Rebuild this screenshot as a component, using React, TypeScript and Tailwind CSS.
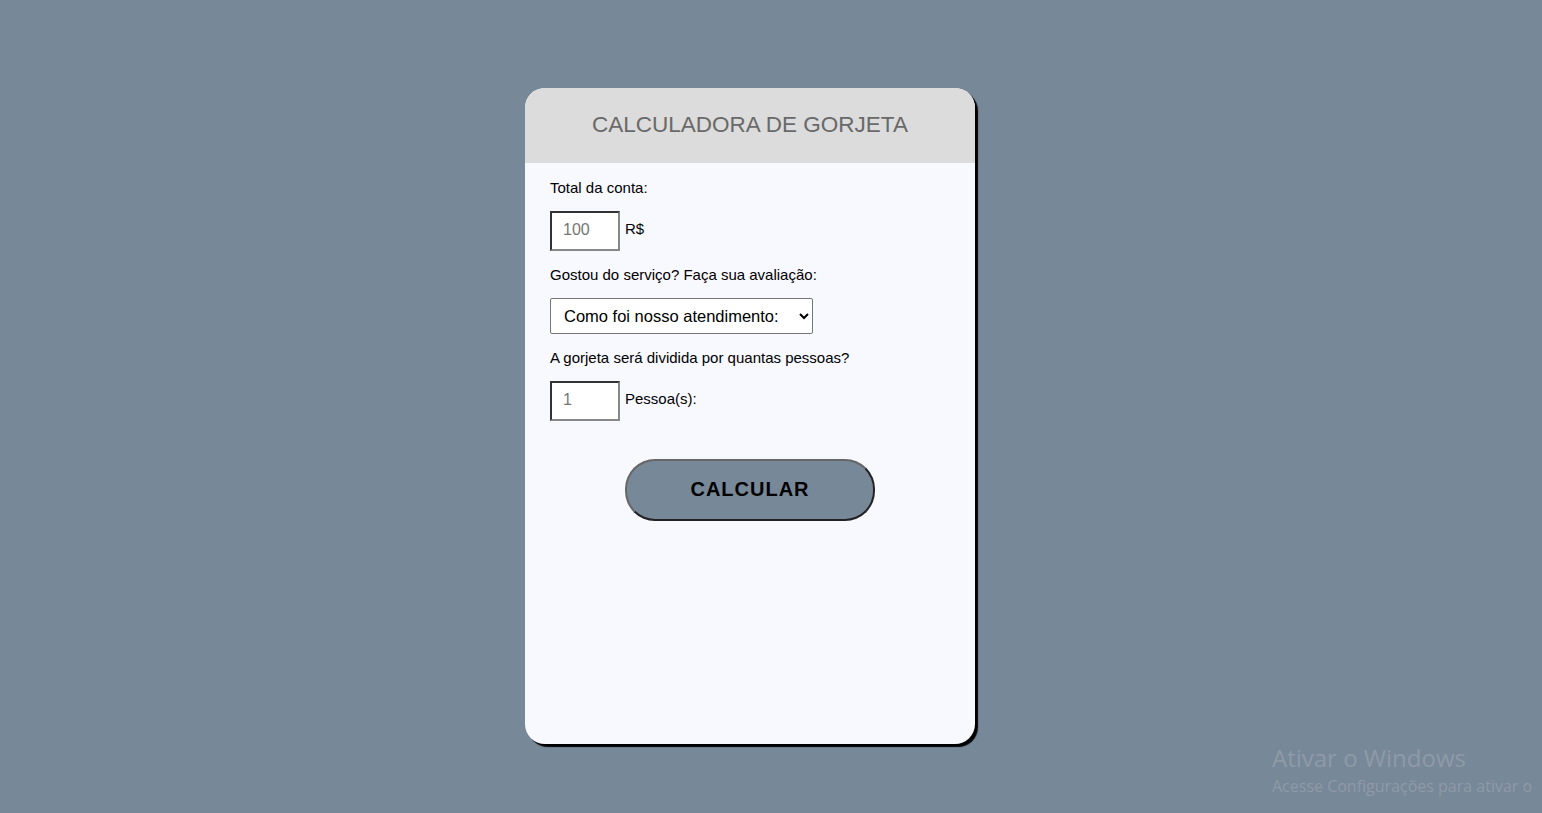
import React from 'react';

export default function App() {
  return (
    <div className="relative min-h-[813px] w-full overflow-hidden bg-[#778899] pt-[88px] font-['Liberation_Sans',Arial,sans-serif]">
      <div className="ml-[525px] h-[656px] w-[450px] overflow-hidden rounded-[20px] bg-[#f8f8ff] shadow-[3px_3px_1px_#000]">
        <div className="flex h-[75px] items-center justify-center bg-[#dcdcdc] pb-[2px]">
          <h1 className="text-[22.5px] text-[#696969]">CALCULADORA DE GORJETA</h1>
        </div>
        <div className="px-[25px] pt-[17px] text-[15px] text-black">
          <p className="leading-4">Total da conta:</p>
          <div className="mt-[15px] flex items-center gap-[5px]">
            <input
              type="text"
              placeholder="100"
              className="h-[40px] w-[70px] border-2 border-t-[#333] border-l-[#333] border-b-[#888] border-r-[#888] bg-white px-[11px] pb-[3px] text-[16px] placeholder:text-[#757575] outline-none"
            />
            <span className="-mt-[3px]">R$</span>
          </div>
          <p className="mt-[16px] leading-4">Gostou do serviço? Faça sua avaliação:</p>
          <select className="mt-[15px] h-[36px] w-[263px] rounded-[2px] border border-[#767676] bg-white pl-[9px] pr-[8px] text-[16.5px] text-black">
            <option>Como foi nosso atendimento:</option>
            <option>Ótimo</option>
            <option>Bom</option>
            <option>Ruim</option>
          </select>
          <p className="mt-[16px] leading-4">A gorjeta será dividida por quantas pessoas?</p>
          <div className="mt-[15px] flex items-center gap-[5px]">
            <input
              type="text"
              placeholder="1"
              className="h-[40px] w-[70px] border-2 border-t-[#333] border-l-[#333] border-b-[#888] border-r-[#888] bg-white px-[11px] pb-[3px] text-[16px] placeholder:text-[#757575] outline-none"
            />
            <span className="-mt-[3px]">Pessoa(s):</span>
          </div>
          <div className="mt-[38px] flex justify-center">
            <button className="h-[62px] w-[250px] rounded-[30px] border-2 border-t-[#666] border-l-[#666] border-b-[#222] border-r-[#222] bg-[#778899] pb-[2px] text-[20px] font-bold tracking-[1px] text-black">
              CALCULAR
            </button>
          </div>
        </div>
      </div>
      <div className="absolute left-[1272px] right-0 top-[742px] overflow-hidden whitespace-nowrap font-['Open_Sans',sans-serif] text-[#8f9aa6]">
        <p className="text-[24px] leading-8">Ativar o Windows</p>
        <p className="text-[16px] leading-6">Acesse Configurações para ativar o</p>
      </div>
    </div>
  );
}
